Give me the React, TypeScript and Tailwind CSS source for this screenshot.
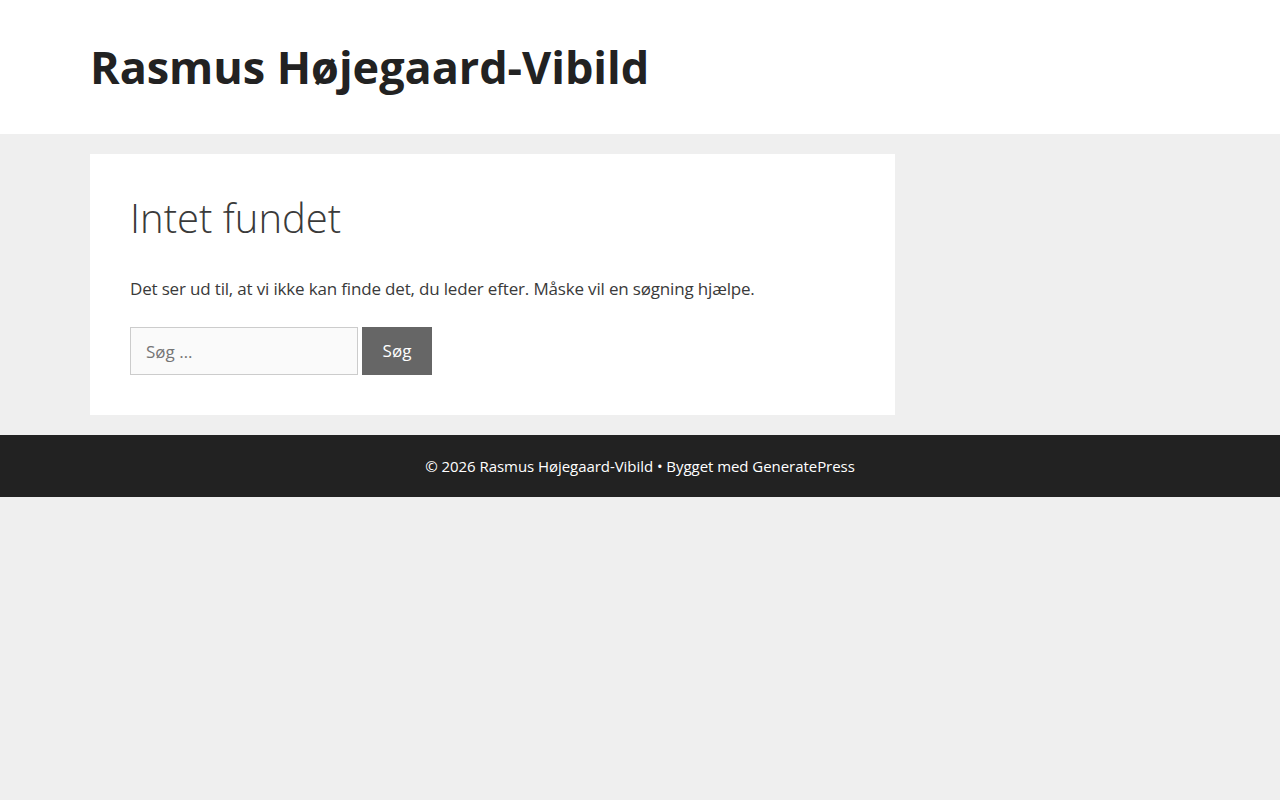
export default function App() {
  return (
    <div
      className="min-h-[800px] bg-[#efefef] text-[#3a3a3a] text-[17px] leading-[1.5]"
      style={{ fontFamily: '"Open Sans", "Noto Sans", sans-serif' }}
    >
      <header className="bg-white">
        <div className="w-[1100px] mx-auto py-[40px] px-0">
          <p className="text-[45px] font-bold leading-[1.2] text-[#222222] tracking-[-0.05px]">Rasmus Højegaard-Vibild</p>
        </div>
      </header>
      <div className="w-[1100px] mx-auto pt-[20px] flex">
        <main className="w-[805px] bg-white p-[40px]">
          <h1 className="text-[40px] font-light leading-[1.2] text-[#3a3a3a]">Intet fundet</h1>
          <div className="mt-[34px]">
            <p className="mb-[25.5px] tracking-[-0.17px]">Det ser ud til, at vi ikke kan finde det, du leder efter. Måske vil en søgning hjælpe.</p>
            <form className="flex gap-[4px]" onSubmit={(e) => e.preventDefault()}>
              <input
                type="search"
                placeholder="Søg …"
                className="w-[228px] h-[48px] border border-[#cccccc] bg-[#fafafa] px-[15px] text-[17px] text-[#666666] placeholder:text-[#757575] outline-none"
              />
              <button className="w-[70px] h-[48px] bg-[#666666] text-white text-[17px]">Søg</button>
            </form>
          </div>
        </main>
      </div>
      <footer className="mt-[20px] bg-[#222222] text-white text-[15px] leading-[22px] py-[20px] text-center">
        <span className="tracking-[-0.05px]">© 2026 Rasmus Højegaard-Vibild • Bygget med GeneratePress</span>
      </footer>
    </div>
  );
}
